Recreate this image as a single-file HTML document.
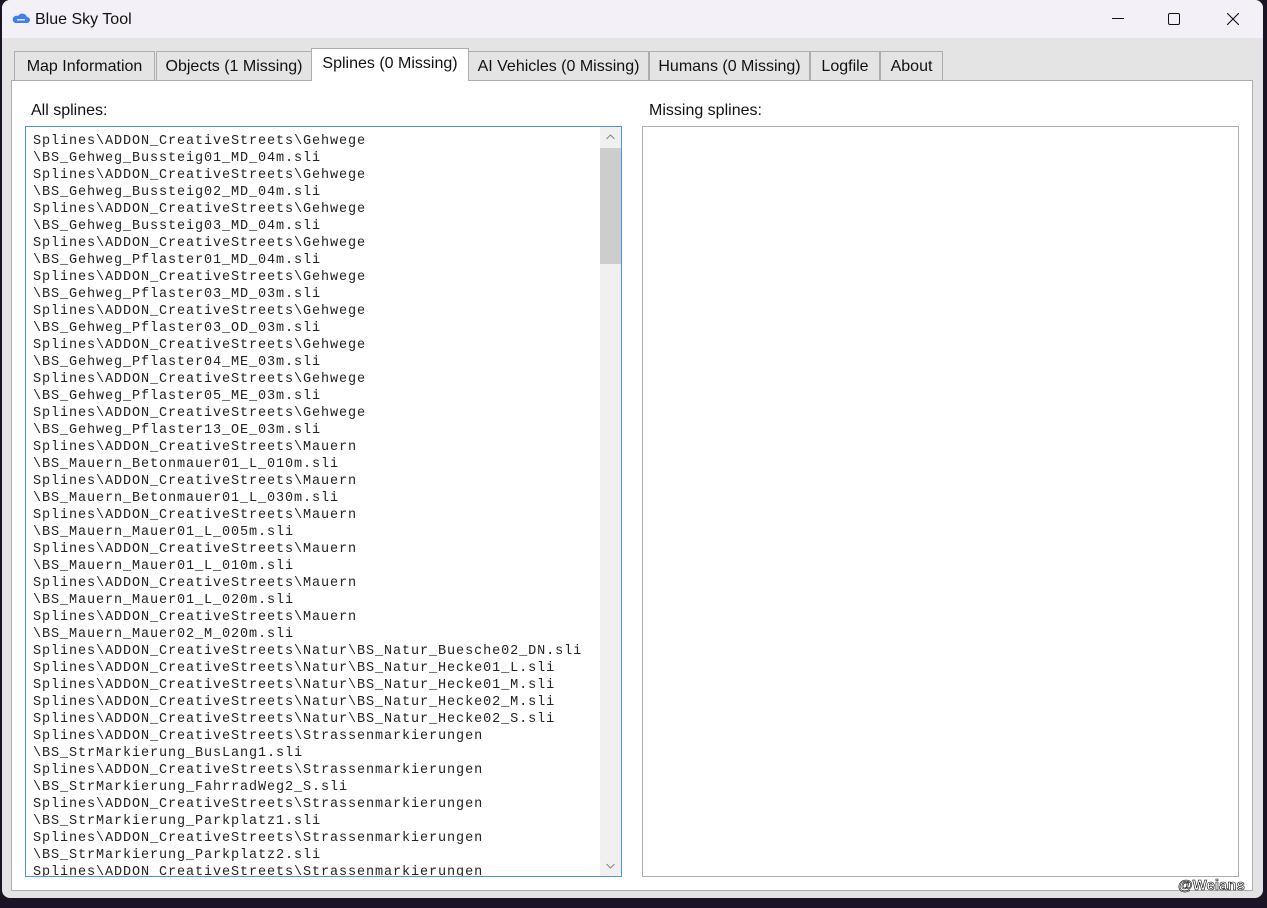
<!DOCTYPE html>
<html><head><meta charset="utf-8"><style>
*{margin:0;padding:0;box-sizing:border-box}
body{width:1267px;height:908px;background:#1a1424;position:relative;overflow:hidden;font-family:"Segoe UI","Liberation Sans",sans-serif}
.win{position:absolute;left:2px;top:0;width:1261px;height:898px;background:#e4e4e4;border-radius:8px 8px 8px 8px;overflow:hidden}
.title{position:absolute;left:0;top:0;width:100%;height:38px;background:#f3f0f7}
.title .t{position:absolute;left:33px;top:11px;font-size:16px;color:#111}
.tabs .tab{position:absolute;top:51px;height:30px;border:1px solid #adadad;border-bottom:none;background:#e4e4e4;font-size:16px;color:#111;padding-top:6px;text-align:center;white-space:nowrap}
.tab.sel{top:48px;height:33px;background:#fff;z-index:3;padding-top:6px}
.panel{position:absolute;left:9px;top:80px;width:1242px;height:811px;background:#fff;border:1px solid #adadad;z-index:2}
.lbl{position:absolute;font-size:16px;color:#111}
.list{position:absolute;left:23px;top:126px;width:597px;height:751px;border:1px solid #4b96dc;background:#fff;overflow:hidden}
.list pre{position:absolute;left:7px;top:6px;font-family:"Liberation Mono",monospace;font-size:13.5px;line-height:17px;color:#222;letter-spacing:0.9px}
.sb{position:absolute;right:0;top:0;width:21px;height:100%;background:#f0f0f0}
.thumb{position:absolute;left:0;top:21px;width:21px;height:116px;background:#cdcdcd}
.miss{position:absolute;left:640px;top:126px;width:597px;height:751px;border:1px solid #adadad;background:#fff}
</style></head><body>
<div class="win">
<div class="title">
<svg style="position:absolute;left:10px;top:12px" width="18" height="12" viewBox="0 0 18 12"><path d="M3 11h12a3 3 0 0 0 0-6 5 5 0 0 0-9-1A3.5 3.5 0 0 0 3 11z" fill="#3f7ff0"/><rect x="5" y="7" width="8" height="1.5" fill="#fff" opacity=".8"/></svg>
<div class="t">Blue Sky Tool</div>
<svg style="position:absolute;left:1110px;top:18px" width="12" height="2"><rect width="12" height="1" fill="#111"/></svg>
<svg style="position:absolute;left:1166px;top:13px" width="12" height="12"><rect x=".5" y=".5" width="11" height="11" rx="1.5" fill="none" stroke="#111"/></svg>
<svg style="position:absolute;left:1225px;top:13px" width="12" height="12"><path d="M0 0L12 12M12 0L0 12" stroke="#111" stroke-width="1.1"/></svg>
</div>
<div class="tabs">
<div class="tab" style="left:12px;width:141px">Map Information</div>
<div class="tab" style="left:154px;width:156px">Objects (1 Missing)</div>
<div class="tab sel" style="left:309px;width:158px">Splines (0 Missing)</div>
<div class="tab" style="left:466px;width:181px">AI Vehicles (0 Missing)</div>
<div class="tab" style="left:647px;width:161px">Humans (0 Missing)</div>
<div class="tab" style="left:808px;width:70px">Logfile</div>
<div class="tab" style="left:878px;width:63px">About</div>
</div>
<div class="panel"></div>
<div style="position:absolute;left:0;top:0;width:100%;height:100%;z-index:4">
<div class="lbl" style="left:29px;top:102px">All splines:</div>
<div class="lbl" style="left:647px;top:102px">Missing splines:</div>
<div class="list"><pre>Splines\ADDON_CreativeStreets\Gehwege
\BS_Gehweg_Bussteig01_MD_04m.sli
Splines\ADDON_CreativeStreets\Gehwege
\BS_Gehweg_Bussteig02_MD_04m.sli
Splines\ADDON_CreativeStreets\Gehwege
\BS_Gehweg_Bussteig03_MD_04m.sli
Splines\ADDON_CreativeStreets\Gehwege
\BS_Gehweg_Pflaster01_MD_04m.sli
Splines\ADDON_CreativeStreets\Gehwege
\BS_Gehweg_Pflaster03_MD_03m.sli
Splines\ADDON_CreativeStreets\Gehwege
\BS_Gehweg_Pflaster03_OD_03m.sli
Splines\ADDON_CreativeStreets\Gehwege
\BS_Gehweg_Pflaster04_ME_03m.sli
Splines\ADDON_CreativeStreets\Gehwege
\BS_Gehweg_Pflaster05_ME_03m.sli
Splines\ADDON_CreativeStreets\Gehwege
\BS_Gehweg_Pflaster13_OE_03m.sli
Splines\ADDON_CreativeStreets\Mauern
\BS_Mauern_Betonmauer01_L_010m.sli
Splines\ADDON_CreativeStreets\Mauern
\BS_Mauern_Betonmauer01_L_030m.sli
Splines\ADDON_CreativeStreets\Mauern
\BS_Mauern_Mauer01_L_005m.sli
Splines\ADDON_CreativeStreets\Mauern
\BS_Mauern_Mauer01_L_010m.sli
Splines\ADDON_CreativeStreets\Mauern
\BS_Mauern_Mauer01_L_020m.sli
Splines\ADDON_CreativeStreets\Mauern
\BS_Mauern_Mauer02_M_020m.sli
Splines\ADDON_CreativeStreets\Natur\BS_Natur_Buesche02_DN.sli
Splines\ADDON_CreativeStreets\Natur\BS_Natur_Hecke01_L.sli
Splines\ADDON_CreativeStreets\Natur\BS_Natur_Hecke01_M.sli
Splines\ADDON_CreativeStreets\Natur\BS_Natur_Hecke02_M.sli
Splines\ADDON_CreativeStreets\Natur\BS_Natur_Hecke02_S.sli
Splines\ADDON_CreativeStreets\Strassenmarkierungen
\BS_StrMarkierung_BusLang1.sli
Splines\ADDON_CreativeStreets\Strassenmarkierungen
\BS_StrMarkierung_FahrradWeg2_S.sli
Splines\ADDON_CreativeStreets\Strassenmarkierungen
\BS_StrMarkierung_Parkplatz1.sli
Splines\ADDON_CreativeStreets\Strassenmarkierungen
\BS_StrMarkierung_Parkplatz2.sli
Splines\ADDON_CreativeStreets\Strassenmarkierungen</pre>
<div class="sb"><div class="thumb"></div>
<svg style="position:absolute;left:6px;top:7px" width="9" height="6"><path d="M0.5 5L4.5 1L8.5 5" fill="none" stroke="#888"/></svg>
<svg style="position:absolute;left:6px;top:736px" width="9" height="6"><path d="M0.5 1L4.5 5L8.5 1" fill="none" stroke="#888"/></svg>
</div></div>
<div class="miss"></div>
</div>
</div>
<div style="position:absolute;left:1178px;top:877px;font-family:'Liberation Sans',sans-serif;font-size:15px;font-weight:bold;color:#fff;-webkit-text-stroke:0.6px #000;z-index:9">@Weians</div>
</body></html>
